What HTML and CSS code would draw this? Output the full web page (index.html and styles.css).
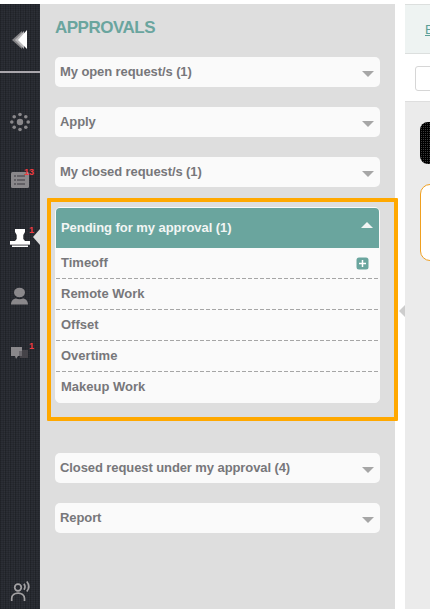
FILE: index.html
```html
<!DOCTYPE html>
<html lang="en">
<head>
<meta charset="utf-8">
<title>Approvals</title>
<link rel="stylesheet" href="styles.css">
</head>
<body>
<div class="app">
  <nav class="rail">
    <a class="rail-item collapse"><svg width="40" height="67" viewBox="0 4 40 67"><path d="M12 40 22 31V49Z" fill="#858487"/><path d="M15 40 24 31V49Z" fill="#b9b8ba"/><path d="M18 40 27 30V49Z" fill="#fff"/></svg></a>
    <a class="rail-item hub"><svg width="40" height="58" viewBox="0 93 40 58" fill="#8a888b"><circle cx="20" cy="122" r="3.2"/><circle cx="20" cy="114.500" r="1.800"/><circle cx="25.800" cy="116.700" r="1.800"/><circle cx="28.200" cy="122" r="1.800"/><circle cx="25.800" cy="127.300" r="1.800"/><circle cx="20" cy="129.500" r="1.800"/><circle cx="14.200" cy="127.300" r="1.800"/><circle cx="11.800" cy="122" r="1.800"/><circle cx="14.200" cy="116.700" r="1.800"/></svg></a>
    <a class="rail-item"><svg width="40" height="58" viewBox="0 151 40 58"><rect x="11" y="172" width="18" height="16" rx="1.5" fill="#8a888b"/><path d="M14 176h2M14 180h2M14 184h2M17 176h8M17 180h8M17 184h8" stroke="#55535a" stroke-width="1.400"/></svg><span class="badge wide">13</span></a>
    <a class="rail-item active"><svg width="40" height="58" viewBox="0 209 40 58"><path d="M15 229h10v3l-1.700 3v4l1.700 2h5v4H10v-4h5l1.700-2v-4L15 232ZM12 245.500h16v1.500H12Z" fill="#fff"/><path d="M10 244.500h20" stroke="#b4b3b7"/></svg><span class="badge">1</span></a>
    <a class="rail-item"><svg width="40" height="58" viewBox="0 267 40 58" fill="#8a888b"><ellipse cx="19.500" cy="292.500" rx="5.500" ry="4.800"/><path d="M11 304.500c0-4 3-6 5-6 2 1 5 1 7 0 2 0 5 2 5 6Z"/></svg></a>
    <a class="rail-item"><svg width="40" height="58" viewBox="0 325 40 58"><path d="M20 350h8v8h-8Z" fill="#454348"/><path d="M11 347h11v9h-4l-2 3-1-3h-4Z" fill="#8a888b"/><path d="M19 351h3v5h-3Z" fill="#6b686d"/></svg><span class="badge">1</span></a>
    <a class="rail-item voice"><svg width="40" height="34" viewBox="0 575 40 34" fill="none" stroke="#a4a2a4" stroke-width="1.700"><circle cx="18" cy="587.500" r="3.300"/><path d="M11.700 601v-2.500c0-7.300 12.800-7.300 12.800 0v2.500M24 583.700q2 3 0 6M26.800 581.500q4 5 0 10"/></svg></a>
  </nav>
  <aside class="panel">
    <h1 class="title">APPROVALS</h1>
    <section class="card"><span>My open request/s (1)</span><i class="caret"></i></section>
    <section class="card"><span>Apply</span><i class="caret"></i></section>
    <section class="card"><span>My closed request/s (1)</span><i class="caret"></i></section>
    <section class="group">
      <header class="group-head"><span>Pending for my approval (1)</span><i class="caret up"></i></header>
      <ul class="rows">
        <li><span>Timeoff</span><svg class="plus" width="13" height="13" viewBox="0 0 13 13"><rect x=".5" y=".5" width="12" height="12" rx="2.500" fill="#6aa59e"/><path d="M3 6.500h7M6.500 3v7" stroke="#fff" stroke-width="1.500"/></svg></li>
        <li>Remote Work</li>
        <li>Offset</li>
        <li>Overtime</li>
        <li>Makeup Work</li>
      </ul>
    </section>
    <section class="card"><span>Closed request under my approval (4)</span><i class="caret"></i></section>
    <section class="card"><span>Report</span><i class="caret"></i></section>
  </aside>
  <div class="gutter"><i class="handle"></i></div>
  <main class="content">
    <div class="crumbs"><a>E</a></div>
    <div class="toolbar"><div class="field"></div></div>
    <div class="tile"></div>
    <div class="notice"></div>
  </main>
</div>
</body>
</html>
```

FILE: styles.css
```css
* { box-sizing: border-box; }
body {
  margin: 0;
  background: #fff;
  font: bold 13px/16px "Liberation Sans", Arial, sans-serif;
  color: #77777a;
  overflow: hidden;
}
.app { display: flex; height: 609px; padding-top: 4px; }
.rail {
  width: 40px;
  flex: none;
  display: flex;
  flex-direction: column;
  background:
    repeating-linear-gradient(180deg, rgba(0,0,0,.12) 0 1px, transparent 1px 2px),
    repeating-linear-gradient(90deg, #23262b 0 1px, #2b2e35 1px 3px, #272a30 3px 4px, #2e3138 4px 5px);
}
.rail-item { display: block; position: relative; height: 58px; flex: none; }
.rail-item svg { display: block; }
.collapse { height: 69px; border-bottom: 2px solid #aaa7ad; }
.hub { margin-top: 20px; }
.voice { height: 34px; margin-top: auto; }
.badge {
  position: absolute;
  left: 29px;
  top: 16px;
  font: bold 9px/10px "Liberation Sans", Arial, sans-serif;
  color: #f03a40;
}
.badge.wide { left: 24px; }
.active::after {
  content: "";
  position: absolute;
  right: 0;
  top: 20px;
  border: solid transparent;
  border-width: 8px 7px 8px 0;
  border-right-color: #dedede;
}
.panel {
  width: 355px;
  flex: none;
  padding: 14px 15px 0;
  background: #dedede;
}
.title {
  margin: 0 0 19px;
  font-size: 17px;
  line-height: 20px;
  letter-spacing: -.5px;
  color: #6aa59e;
}
.card {
  display: flex;
  align-items: center;
  justify-content: space-between;
  height: 30px;
  margin-bottom: 20px;
  padding: 0 6px 0 5px;
  border-radius: 5px;
  background: #fafafa;
  letter-spacing: -.09px;
}
.caret {
  border: solid transparent;
  border-width: 6px 6px 0;
  border-top-color: #a6a6a6;
  margin-top: 4px;
}
.caret.up {
  border-width: 0 6px 6px;
  border-bottom-color: #f2f5f4;
  margin: 0 0 6px;
}
.group {
  position: relative;
  height: 196px;
  margin-bottom: 50px;
  border: 1px solid #fafafa;
  border-radius: 5px;
  background: #fafafa;
}
.group::after {
  content: "";
  position: absolute;
  inset: -10px -19px -19px -9px;
  border: 4px solid #ffa800;
  border-radius: 1px;
}
.group-head {
  display: flex;
  align-items: center;
  justify-content: space-between;
  height: 40px;
  padding: 0 6px 0 5px;
  border-radius: 4px 4px 0 0;
  background: #6aa59e;
  color: #f2f5f4;
  letter-spacing: -.05px;
}
.rows { list-style: none; margin: 0; padding: 0; }
.rows li {
  display: flex;
  align-items: center;
  justify-content: space-between;
  height: 31px;
  padding: 0 10px 1px 5px;
  background: repeating-linear-gradient(90deg, #a6a6a6 0 4px, transparent 4px 6px) bottom / 100% 1px no-repeat;
}
.rows li:last-child { background: none; }
.gutter { width: 10px; flex: none; position: relative; }
.handle {
  position: absolute;
  right: 0;
  top: 301px;
  border: solid transparent;
  border-width: 6px 6px 6px 0;
  border-right-color: #cdcdcd;
}
.content { width: 25px; flex: none; overflow: hidden; background: #ebebeb; }
.crumbs {
  height: 50px;
  padding: 17px 0 0 20px;
  border: solid #dcdfde;
  border-width: 1px 0;
  background: #eef3f2;
  font-weight: normal;
  color: #5b9f98;
  text-decoration: underline;
}
.toolbar {
  height: 48px;
  padding: 12px 0 0 10px;
  border-bottom: 1px solid #dedede;
  background: #fff;
}
.field { width: 60px; height: 25px; border: 1px solid #d6d6d6; border-radius: 3px; }
.tile {
  width: 60px;
  height: 42px;
  margin: 20px 0 0 15px;
  border-radius: 8px;
  background: linear-gradient(#333, #333) 0 0 / 2px 2px;
  background:
    repeating-linear-gradient(180deg, #000 0 1px, transparent 1px 2px),
    repeating-linear-gradient(90deg, #000 0 1px, #3a3a3a 1px 2px);
}
.notice {
  width: 60px;
  height: 77px;
  margin: 20px 0 0 15px;
  border: 1px solid #f0a020;
  border-radius: 10px;
  background: #fff;
}
```
